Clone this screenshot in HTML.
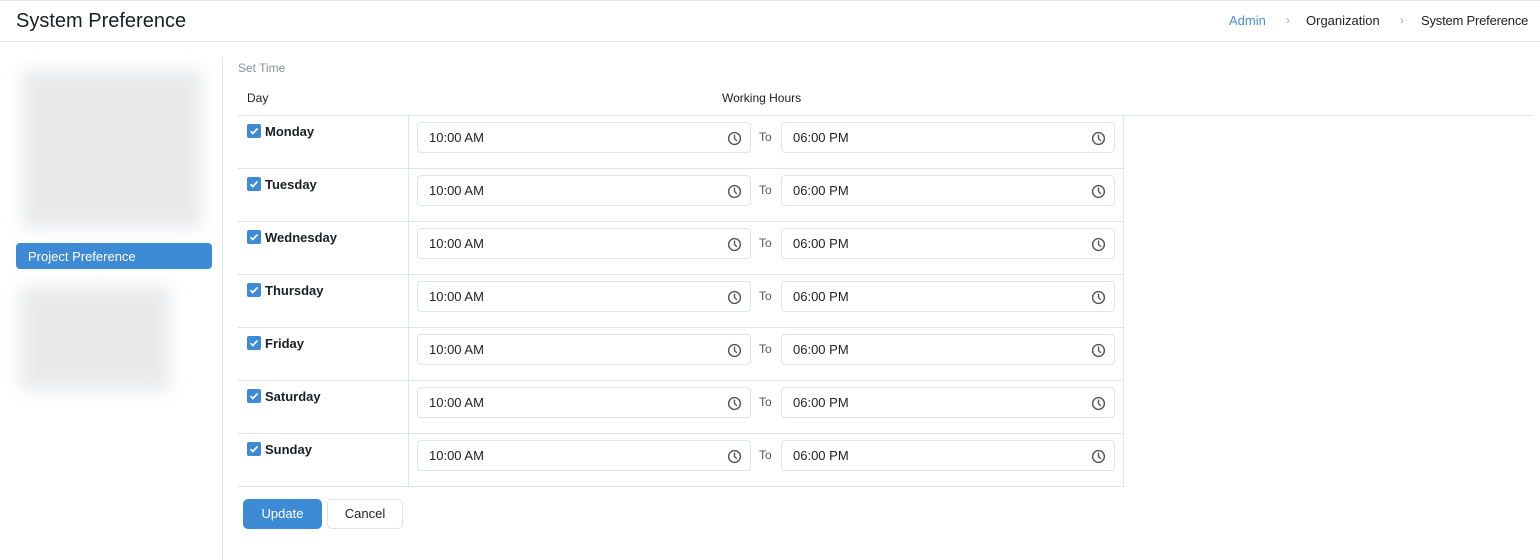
<!DOCTYPE html>
<html><head><meta charset="utf-8"><style>
*{box-sizing:border-box;margin:0;padding:0}
body{width:1540px;height:560px;background:#fff;font-family:"Liberation Sans",sans-serif;color:#1f2329;position:relative;overflow:hidden}
.a{position:absolute}
.blur{filter:blur(9px);background:#e8e9eb}
.inp{position:absolute;height:31px;border:1px solid #dfe3ea;border-radius:4px;font-size:13px;padding:7px 0 0 11px;color:#222}
.inp svg{position:absolute;right:8px;top:8px}
.row{position:absolute;left:238px;width:886px;height:53px;border-bottom:1px solid #dfe3ea}
.cb{position:absolute;left:9px;top:8px;width:14px;height:14px;background:#3d8bd4;border-radius:2px}
.day{position:absolute;left:27px;top:8px;font-weight:bold;font-size:13px;color:#1b1f24}
.to{position:absolute;left:521px;top:14px;font-size:12px;color:#555}
</style></head><body>
<div class="a" style="left:0;top:0;width:1540px;height:1px;background:#e3e6ea"></div>
<div class="a" style="left:16px;top:10px;font-size:20px;color:#1b1f24">System Preference</div>
<div class="a" style="left:1229px;top:13px;font-size:13px;color:#4a8fd6">Admin</div>
<div class="a" style="left:1286px;top:13px;font-size:12px;color:#aaa">›</div>
<div class="a" style="left:1306px;top:13px;font-size:13px;color:#222">Organization</div>
<div class="a" style="left:1400px;top:13px;font-size:12px;color:#aaa">›</div>
<div class="a" style="left:1421px;top:13px;font-size:13px;color:#222;letter-spacing:-0.2px">System Preference</div>
<div class="a" style="left:0;top:41px;width:1540px;height:1px;background:#e3e6ea"></div>

<div class="a blur" style="left:22px;top:70px;width:180px;height:158px"></div>
<div class="a" style="left:16px;top:243px;width:196px;height:26px;background:#3d8bd4;border-radius:4px;color:#fff;font-size:13px;padding:6px 0 0 12px">Project Preference</div>
<div class="a blur" style="left:20px;top:286px;width:150px;height:104px"></div>
<div class="a" style="left:222px;top:58px;width:1px;height:502px;background:#e3e6ea"></div>

<div class="a" style="left:238px;top:61px;font-size:12px;color:#8a909a">Set Time</div>
<div class="a" style="left:247px;top:91px;font-size:12px;color:#222">Day</div>
<div class="a" style="left:722px;top:91px;font-size:12px;color:#222">Working Hours</div>
<div class="a" style="left:238px;top:115px;width:1295px;height:1px;background:#dfe3ea"></div>
<div class="a" style="left:408px;top:116px;width:1px;height:371px;background:#dfe3ea"></div>
<div class="a" style="left:1123px;top:116px;width:1px;height:371px;background:#dfe3ea"></div>

<div id="rows"></div>
<script>
var days=["Monday","Tuesday","Wednesday","Thursday","Friday","Saturday","Sunday"];
var clk='<svg width="15" height="15" viewBox="0 0 16 16"><circle cx="8" cy="8" r="6.3" fill="none" stroke="#555" stroke-width="1.5"/><path d="M8 4.5V8l2.2 2.2" fill="none" stroke="#555" stroke-width="1.5" stroke-linecap="round"/></svg>';
var chk='<svg width="14" height="14" viewBox="0 0 14 14"><path d="M3.5 7.2l2.3 2.3 4.7-5" fill="none" stroke="#fff" stroke-width="1.7"/></svg>';
var h='';
days.forEach(function(d,i){
 var t=116+i*53;
 h+='<div class="row" style="top:'+t+'px"><div class="cb">'+chk+'</div><div class="day">'+d+'</div>'+
 '<div class="inp" style="left:179px;top:6px;width:334px">10:00 AM'+clk+'</div><div class="to">To</div>'+
 '<div class="inp" style="left:543px;top:6px;width:334px">06:00 PM'+clk+'</div></div>';
});
document.getElementById('rows').innerHTML=h;
</script>
<div class="a" style="left:243px;top:499px;width:79px;height:30px;background:#3d8bd4;border-radius:5px;color:#fff;font-size:13px;text-align:center;padding-top:7px">Update</div>
<div class="a" style="left:327px;top:499px;width:76px;height:30px;border:1px solid #dfe3ea;border-radius:5px;color:#222;font-size:13px;text-align:center;padding-top:6px">Cancel</div>
</body></html>
